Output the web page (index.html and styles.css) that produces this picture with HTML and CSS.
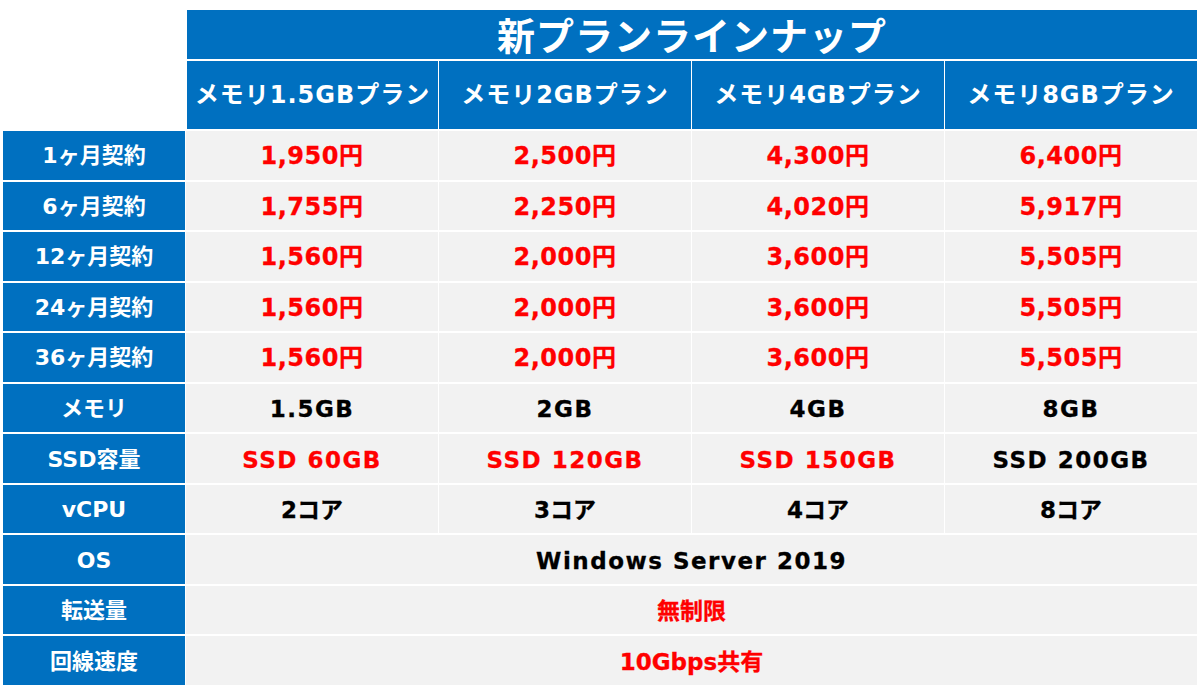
FILE: index.html
```html
<!DOCTYPE html>
<html lang="ja">
<head>
<meta charset="utf-8">
<title>新プランラインナップ</title>
<link rel="stylesheet" href="styles.css">
</head>
<body>
<div class="plan-table">
  <div class="corner"></div>
  <div class="title">新プランラインナップ</div>
  <div class="head">メモリ1.5GBプラン</div>
  <div class="head">メモリ2GBプラン</div>
  <div class="head">メモリ4GBプラン</div>
  <div class="head">メモリ8GBプラン</div>

  <div class="label">1ヶ月契約</div>
  <div class="cell price">1,950円</div>
  <div class="cell price">2,500円</div>
  <div class="cell price">4,300円</div>
  <div class="cell price">6,400円</div>

  <div class="label">6ヶ月契約</div>
  <div class="cell price">1,755円</div>
  <div class="cell price">2,250円</div>
  <div class="cell price">4,020円</div>
  <div class="cell price">5,917円</div>

  <div class="label">12ヶ月契約</div>
  <div class="cell price">1,560円</div>
  <div class="cell price">2,000円</div>
  <div class="cell price">3,600円</div>
  <div class="cell price">5,505円</div>

  <div class="label">24ヶ月契約</div>
  <div class="cell price">1,560円</div>
  <div class="cell price">2,000円</div>
  <div class="cell price">3,600円</div>
  <div class="cell price">5,505円</div>

  <div class="label">36ヶ月契約</div>
  <div class="cell price">1,560円</div>
  <div class="cell price">2,000円</div>
  <div class="cell price">3,600円</div>
  <div class="cell price">5,505円</div>

  <div class="label">メモリ</div>
  <div class="cell spaced">1.5GB</div>
  <div class="cell spaced">2GB</div>
  <div class="cell spaced">4GB</div>
  <div class="cell spaced">8GB</div>

  <div class="label">SSD容量</div>
  <div class="cell spaced red">SSD 60GB</div>
  <div class="cell spaced red">SSD 120GB</div>
  <div class="cell spaced red">SSD 150GB</div>
  <div class="cell spaced">SSD 200GB</div>

  <div class="label">vCPU</div>
  <div class="cell">2コア</div>
  <div class="cell">3コア</div>
  <div class="cell">4コア</div>
  <div class="cell">8コア</div>

  <div class="label">OS</div>
  <div class="cell wide spaced">Windows Server 2019</div>

  <div class="label">転送量</div>
  <div class="cell wide red">無制限</div>

  <div class="label">回線速度</div>
  <div class="cell wide red">10Gbps共有</div>
</div>
</body>
</html>
```

FILE: styles.css
```css
* {
  box-sizing: border-box;
}

html, body {
  margin: 0;
  padding: 0;
  background: #ffffff;
}

body {
  padding: 10px 0 0 3px;
  font-family: "DejaVu Sans", "Noto Sans CJK JP", sans-serif;
  font-weight: 700;
}

.plan-table {
  display: grid;
  grid-template-columns: 182px repeat(4, 252px);
  grid-template-rows: 49px 68px repeat(11, 48.55px);
  column-gap: 1px;
  row-gap: 2px;
  width: 1197px;
}

.plan-table > div {
  display: flex;
  align-items: center;
  justify-content: center;
  white-space: nowrap;
  line-height: 30px;
}

.corner {
  grid-row: 1 / span 2;
  background: #ffffff;
}

.title {
  grid-column: 2 / span 4;
  margin-left: 1px;
  background: #0070c0;
  color: #ffffff;
  font-family: "Noto Sans CJK JP", sans-serif;
  font-size: 38px;
  letter-spacing: 1px;
  padding-bottom: 2px;
}

.head {
  background: #0070c0;
  color: #ffffff;
  font-size: 24px;
  letter-spacing: 1px;
}

.plan-table > .head:nth-child(3) {
  margin-left: 1px;
}

.label {
  background: #0070c0;
  color: #ffffff;
  font-size: 22px;
  padding-top: 2px;
}

.cell {
  background: #f2f2f2;
  color: #000000;
  font-size: 23px;
  padding-top: 2px;
  -webkit-text-stroke: 0.3px currentColor;
}

.wide {
  grid-column: 2 / span 4;
}

.price {
  color: #ff0000;
  font-size: 24px;
  letter-spacing: 0.5px;
}

.red {
  color: #ff0000;
}

.spaced {
  letter-spacing: 1.5px;
}
```
